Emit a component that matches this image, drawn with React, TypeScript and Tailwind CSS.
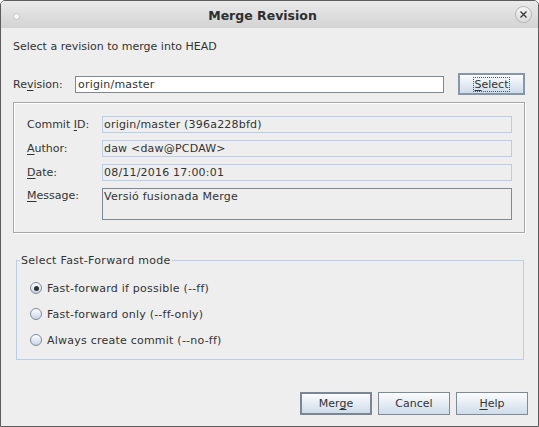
import React from "react";

const font = { fontFamily: '"DejaVu Sans", "Liberation Sans", sans-serif' };

function Field({ children, tall }: { children?: React.ReactNode; tall?: boolean }) {
  if (tall) {
    return (
      <div className="flex-1 h-[32px] border border-[#7d8a96] px-[1px] leading-[13px] pt-[1px] text-[#333] tracking-[0.25px]">
        {children}
      </div>
    );
  }
  return (
    <div className="flex-1 h-[17px] border border-[#b8cfe5] px-[1px] flex items-center text-[#333] tracking-[0.2px]">
      {children}
    </div>
  );
}

function Label({ children }: { children: React.ReactNode }) {
  return <div className="w-[75px] shrink-0 text-[#333]">{children}</div>;
}

function Radio({ checked, label }: { checked?: boolean; label: string }) {
  return (
    <div className="h-[26px] flex items-center gap-[5px]">
      <div className="w-[12px] h-[12px] rounded-full border border-[#7d8a99] bg-gradient-to-b from-[#ffffff] to-[#c5d5e6] flex items-center justify-center">
        {checked && <div className="w-[5px] h-[5px] rounded-full bg-[#333]" />}
      </div>
      <span className="text-[#333] tracking-[0.23px]">{label}</span>
    </div>
  );
}

function Btn({ children, strong }: { children: React.ReactNode; strong?: boolean }) {
  return (
    <button
      className={
        "w-[72px] h-[23px] flex items-center justify-center text-[#333] bg-gradient-to-b from-[#fbfcfd] to-[#cfdcea] " +
        (strong ? "border-2 border-[#7a8796]" : "border border-[#7d8a99]")
      }
    >
      {children}
    </button>
  );
}

export default function App() {
  return (
    <div
      style={font}
      className="w-[539px] h-[427px] border border-[#5c5c5c] rounded-t-[5px] bg-[#eeeeee] overflow-hidden flex flex-col text-[11px] leading-[13px]"
    >
      {/* title bar */}
      <div className="h-[27px] shrink-0 grid grid-cols-[1fr_auto_1fr] items-center bg-gradient-to-b from-[#eaeaea] to-[#d3d3d3]">
        <div className="pl-[12px] pt-[4px]">
          <div className="w-[7px] h-[7px] rounded-full bg-[#f6f6f6] border border-[#c4c4c4]" />
        </div>
        <div className="text-[12.5px] font-bold text-[#2e2e2e] pt-[1px] mr-[14px]">Merge Revision</div>
        <div className="flex justify-end pr-[6px]">
          <div className="w-[17px] h-[17px] rounded-full border border-[#b4b4b4] bg-gradient-to-b from-[#f4f4f4] to-[#dcdcdc] flex items-center justify-center">
            <svg width="9" height="9" viewBox="0 0 9 9">
              <path d="M1.5 1.5 L7.5 7.5 M7.5 1.5 L1.5 7.5" stroke="#3c3c3c" strokeWidth="1.4" />
            </svg>
          </div>
        </div>
      </div>

      <div className="flex-1 flex flex-col pl-[12px] pr-[13px]">
        <div className="mt-[12px] text-[#333]">Select a revision to merge into HEAD</div>

        {/* revision row */}
        <div className="mt-[20px] h-[22px] flex items-center">
          <div className="w-[62px] shrink-0 text-[#333]">
            Re<u className="underline-offset-2">v</u>ision:
          </div>
          <div className="flex-1 h-[17px] bg-white border border-[#7d8a96] px-[2px] flex items-center text-[#333] tracking-[0.2px]">
            origin/master
          </div>
          <button className="ml-[14px] w-[67px] h-[22px] border-2 border-[#8797aa] bg-gradient-to-b from-[#fbfcfd] to-[#cfdcea] flex items-center justify-center text-[#333]">
            <span className="border border-dotted border-[#555] px-[1px] leading-[13px]">
              <u className="underline-offset-2">S</u>elect
            </span>
          </button>
        </div>

        {/* commit panel */}
        <div className="mt-[7px] border border-[#a6a6a6] shadow-[inset_1px_1px_0_#ffffff,1px_1px_0_#ffffff] pl-[13px] pr-[12px] pt-[13px] pb-[12px] flex flex-col gap-[7px]">
          <div className="flex items-center">
            <Label>
              Commit <u className="underline-offset-2">I</u>D:
            </Label>
            <Field>origin/master (396a228bfd)</Field>
          </div>
          <div className="flex items-center">
            <Label>
              <u className="underline-offset-2">A</u>uthor:
            </Label>
            <Field>daw &lt;daw@PCDAW&gt;</Field>
          </div>
          <div className="flex items-center">
            <Label>
              <u className="underline-offset-2">D</u>ate:
            </Label>
            <Field>08/11/2016 17:00:01</Field>
          </div>
          <div className="flex items-start">
            <div className="w-[75px] shrink-0 text-[#333] pt-[1px]">
              <u className="underline-offset-2">M</u>essage:
            </div>
            <Field tall>Versió fusionada Merge</Field>
          </div>
        </div>

        {/* fast forward group */}
        <div className="mt-[27px] ml-[3px] mr-[1px] h-[100px] border border-[#b8cfe5] pl-[13px] pt-[14px] relative">
          <div className="absolute left-[3px] top-[-7px] bg-[#eeeeee] px-[1px] text-[#333] tracking-[0.3px]">
            Select Fast-Forward mode
          </div>
          <Radio checked label="Fast-forward if possible (--ff)" />
          <Radio label="Fast-forward only (--ff-only)" />
          <Radio label="Always create commit (--no-ff)" />
        </div>

        <div className="flex-1" />

        {/* buttons */}
        <div className="flex justify-end gap-[6px] mr-[-3px] mb-[11px]">
          <Btn strong>
            Mer<u className="underline-offset-2">g</u>e
          </Btn>
          <Btn>Cancel</Btn>
          <Btn>
            <u className="underline-offset-2">H</u>elp
          </Btn>
        </div>
      </div>
    </div>
  );
}
